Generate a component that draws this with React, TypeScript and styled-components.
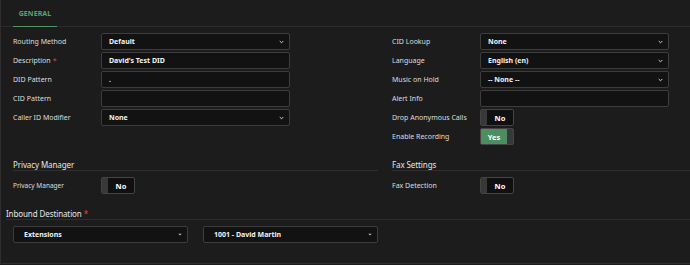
import { FunctionComponent } from "react";
import styled, { createGlobalStyle } from "styled-components";

const GlobalStyle = createGlobalStyle`
  html, body {
    margin: 0;
    padding: 0;
    background: #1c1c1c;
    font-family: "Noto Sans", "Open Sans", sans-serif;
    overflow: hidden;
  }
`;

const Panel = styled.div`
  box-sizing: border-box;
  width: 690px;
  height: 264px;
  border-left: 1px solid #2e2e2e;
  border-bottom: 1px solid #2e2e2e;
  background: #1c1c1c;
  overflow: hidden;
`;

const TabBar = styled.div`
  height: 26px;
  border-bottom: 1px solid #2c2c2c;
  padding-left: 12px;
  display: flex;
`;

const Tab = styled.div`
  width: 44px;
  display: flex;
  align-items: center;
  justify-content: center;
  border-bottom: 1px solid #4f9466;
  margin-bottom: -1px;
  color: #5aa26f;
  font-size: 7px;
  font-weight: 700;
  letter-spacing: 0.1px;
`;

const Body = styled.div`
  padding: 6px 0 0 12px;
`;

const Grid = styled.div`
  display: grid;
  grid-template-columns: 365px minmax(0, 1fr);
  column-gap: 14px;
`;

const Column = styled.div`
  display: flex;
  flex-direction: column;
  gap: 2px;
`;

const Row = styled.div`
  display: flex;
  align-items: center;
  height: 17px;
`;

const Label = styled.div<{ $small?: boolean }>`
  width: 88px;
  flex: none;
  color: #dedede;
  font-size: ${(p) => (p.$small ? "6.5px" : "7px")};
  white-space: nowrap;
`;

const Req = styled.span`
  color: #e0453f;
  margin-left: 2px;
`;

const Field = styled.div<{ $w?: number; $pad?: number }>`
  box-sizing: border-box;
  width: ${(p) => p.$w ?? 189}px;
  height: 17px;
  display: flex;
  align-items: center;
  justify-content: space-between;
  padding: 0 5px 0 ${(p) => p.$pad ?? 7}px;
  background: #121212;
  border: 1px solid #3d3d3d;
  border-radius: 2px;
  color: #f2f2f2;
  font-size: 7px;
  font-weight: 700;
`;

const Heading = styled.div<{ $outdent?: boolean }>`
  height: 11px;
  line-height: 11px;
  margin-top: 14px;
  margin-left: ${(p) => (p.$outdent ? "-7px" : "0")};
  border-bottom: 1px solid #2e2e2e;
  color: #e6e6e6;
  font-size: 8px;
  letter-spacing: -0.1px;
  margin-bottom: 6px;
`;

const ToggleBox = styled.div<{ $on?: boolean }>`
  box-sizing: border-box;
  width: 34px;
  height: 17px;
  display: flex;
  flex-direction: ${(p) => (p.$on ? "row-reverse" : "row")};
  border: 1px solid #444;
  border-radius: 2px;
  overflow: hidden;
  background: ${(p) => (p.$on ? "#4d8d60" : "#101010")};
`;

const Knob = styled.div`
  width: 6px;
  background: #383838;
`;

const ToggleText = styled.div`
  flex: 1;
  display: flex;
  align-items: center;
  justify-content: center;
  color: #ffffff;
  font-size: 7.5px;
  font-weight: 700;
`;

const DestRow = styled.div`
  display: flex;
  gap: 15px;
`;

const Chevron = () => (
  <svg width="5" height="4" viewBox="0 0 5 4">
    <polyline points="0.7,1 2.5,2.8 4.3,1" fill="none" stroke="#cfcfcf" strokeWidth="1" />
  </svg>
);

const Caret = () => (
  <svg width="4" height="3" viewBox="0 0 4 3">
    <polygon points="0.3,0.8 3.7,0.8 2,2.4" fill="#bdbdbd" />
  </svg>
);

type FieldProps = { label: string; value?: string; select?: boolean; required?: boolean };

const FieldRow: FunctionComponent<FieldProps> = ({ label, value = "", select, required }) => (
  <Row>
    <Label>
      {label}
      {required && <Req>*</Req>}
    </Label>
    <Field>
      <span>{value}</span>
      {select && <Chevron />}
    </Field>
  </Row>
);

const Toggle: FunctionComponent<{ label: string; on?: boolean; small?: boolean }> = ({
  label,
  on,
  small,
}) => (
  <Row>
    <Label $small={small}>{label}</Label>
    <ToggleBox $on={on}>
      <Knob />
      <ToggleText>{on ? "Yes" : "No"}</ToggleText>
    </ToggleBox>
  </Row>
);

const App: FunctionComponent = () => {
  return (
    <>
      <GlobalStyle />
      <Panel>
        <TabBar>
          <Tab>GENERAL</Tab>
        </TabBar>
        <Body>
          <Grid>
            <Column>
              <FieldRow label="Routing Method" value="Default" select />
              <FieldRow label="Description" value="David's Test DID" required />
              <FieldRow label="DID Pattern" value="." />
              <FieldRow label="CID Pattern" />
              <FieldRow label="Caller ID Modifier" value="None" select />
            </Column>
            <Column>
              <FieldRow label="CID Lookup" value="None" select />
              <FieldRow label="Language" value="English (en)" select />
              <FieldRow label="Music on Hold" value="-- None --" select />
              <FieldRow label="Alert Info" />
              <Toggle label="Drop Anonymous Calls" />
              <Toggle label="Enable Recording" on />
            </Column>
            <div>
              <Heading>Privacy Manager</Heading>
              <Toggle label="Privacy Manager" small />
            </div>
            <div>
              <Heading>Fax Settings</Heading>
              <Toggle label="Fax Detection" />
            </div>
          </Grid>
          <Heading $outdent>
            Inbound Destination<Req>*</Req>
          </Heading>
          <DestRow>
            <Field $w={175} $pad={10}>
              <span>Extensions</span>
              <Caret />
            </Field>
            <Field $w={175} $pad={10}>
              <span>1001 - David Martin</span>
              <Caret />
            </Field>
          </DestRow>
        </Body>
      </Panel>
    </>
  );
};

export default App;
